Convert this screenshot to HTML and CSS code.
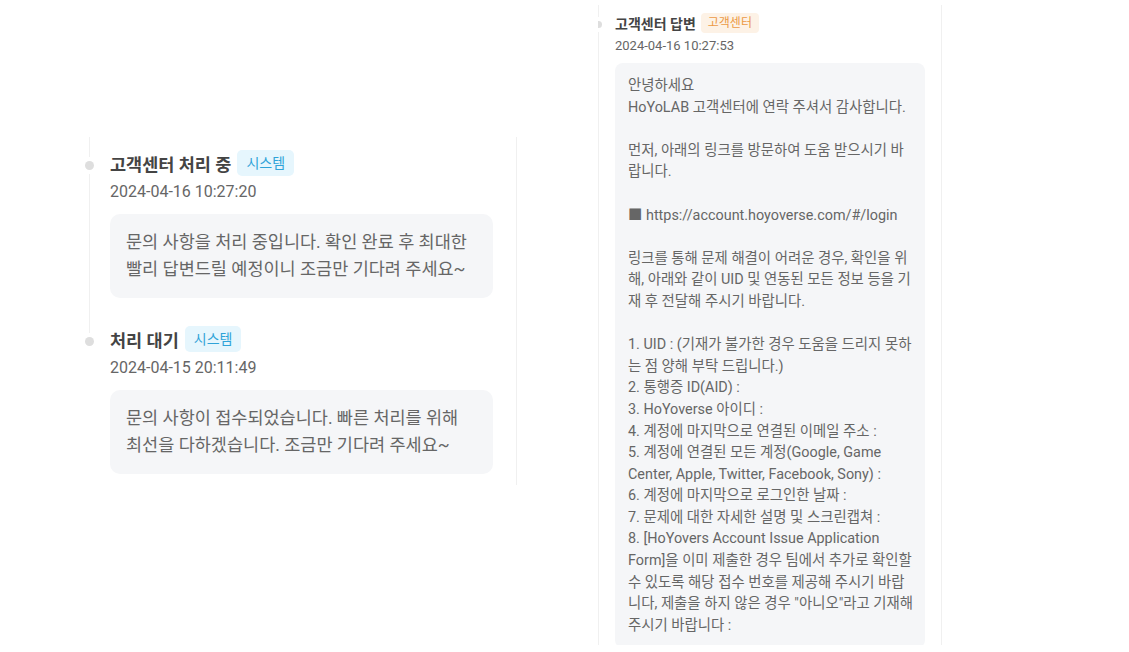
FILE: index.html
```html
<!DOCTYPE html>
<html lang="ko">
<head>
    <meta charset="UTF-8">
    <meta name="viewport" content="width=device-width, initial-scale=1.0">
    <title>문의 처리 내역</title>
    <link rel="stylesheet" href="styles.css">
</head>
<body>
    <div class="page">

        <!-- progress log -->
        <div class="pane pane-large">
            <div class="item">
                <div class="item-head">
                    <span class="item-title">고객센터 처리 중</span>
                    <span class="tag tag-system">시스템</span>
                </div>
                <div class="item-date">2024-04-16 10:27:20</div>
                <div class="bubble">문의 사항을 처리 중입니다. 확인 완료 후 최대한 빨리 답변드릴 예정이니 조금만 기다려 주세요~</div>
            </div>
            <div class="item">
                <div class="item-head">
                    <span class="item-title">처리 대기</span>
                    <span class="tag tag-system">시스템</span>
                </div>
                <div class="item-date">2024-04-15 20:11:49</div>
                <div class="bubble">문의 사항이 접수되었습니다. 빠른 처리를 위해 최선을 다하겠습니다. 조금만 기다려 주세요~</div>
            </div>
        </div>

        <!-- answer -->
        <div class="pane pane-small">
            <div class="item">
                <div class="item-head">
                    <span class="item-title">고객센터 답변</span>
                    <span class="tag tag-cs">고객센터</span>
                </div>
                <div class="item-date">2024-04-16 10:27:53</div>
                <div class="bubble">안녕하세요
HoYoLAB 고객센터에 연락 주셔서 감사합니다.

먼저, 아래의 링크를 방문하여 도움 받으시기 바랍니다.

■ https://account.hoyoverse.com/#/login

링크를 통해 문제 해결이 어려운 경우, 확인을 위해, 아래와 같이 UID 및 연동된 모든 정보 등을 기재 후 전달해 주시기 바랍니다.

1. UID : (기재가 불가한 경우 도움을 드리지 못하는 점 양해 부탁 드립니다.)
2. 통행증 ID(AID) :
3. HoYoverse 아이디 :
4. 계정에 마지막으로 연결된 이메일 주소 :
5. 계정에 연결된 모든 계정(Google, Game Center, Apple, Twitter, Facebook, Sony) :
6. 계정에 마지막으로 로그인한 날짜 :
7. 문제에 대한 자세한 설명 및 스크린캡쳐 :
8. [HoYovers Account Issue Application Form]을 이미 제출한 경우 팀에서 추가로 확인할 수 있도록 해당 접수 번호를 제공해 주시기 바랍니다, 제출을 하지 않은 경우 "아니오"라고 기재해 주시기 바랍니다 :
</div>
            </div>
        </div>

    </div>
</body>
</html>
```

FILE: styles.css
```css
body {
    margin: 0;
    background: #fff;
    font-family: Roboto, "Noto Sans CJK KR", sans-serif;
    color: #444;
}

.page {
    display: flex;
    align-items: flex-start;
    padding-left: 89px;
}

.pane {
    border-right: 1px solid #f0f0f0;
    box-sizing: border-box;
}

.item {
    position: relative;
}

/* timeline line + dot */
.item::before {
    content: "";
    position: absolute;
    left: 0;
    top: 0;
    bottom: 0;
    width: 1px;
    background: #f0f0f0;
}

.item:last-child::before {
    bottom: auto;
    height: 20px;
}

.pane-small .item:last-child::before {
    bottom: 0;
    height: auto;
}

.item::after {
    content: "";
    position: absolute;
    border-radius: 50%;
    background: #dedede;
    box-shadow: 0 0 0 4px #fff;
}

.item-head {
    display: flex;
    align-items: center;
}

.item-title {
    font-weight: bold;
    color: #444;
}

.tag {
    border-radius: 4px;
}

.tag-system {
    background: #e6f6fd;
    color: #2fa3d8;
}

.tag-cs {
    background: #fdf2e6;
    color: #ec9a45;
}

.item-date {
    color: #666;
}

.bubble {
    background: #f5f6f8;
    color: #666;
}

/* left column, bigger scale */
.pane-large {
    width: 428px;
    margin-top: 137px;
    padding: 0 23px 11px 0;
}

.pane-large .item {
    padding: 13px 0 15px 21px;
}

.pane-large .item:last-child {
    padding-bottom: 0;
}

.pane-large .item::after {
    left: -4px;
    top: 24px;
    width: 9px;
    height: 9px;
}

.pane-large .item-head {
    height: 26px;
}

.pane-large .item-title {
    font-size: 17.5px;
}

.pane-large .tag {
    margin-left: 6px;
    padding: 0 9px;
    font-size: 14px;
    line-height: 26px;
    border-radius: 5px;
}

.pane-large .item-date {
    margin-top: 5px;
    font-size: 16px;
    line-height: 22px;
}

.pane-large .bubble {
    margin-top: 11px;
    padding: 15px 20px 15px 16px;
    border-radius: 10px;
    font-size: 17.5px;
    line-height: 27px;
}

/* right column, smaller scale */
.pane-small {
    width: 344px;
    height: 640px;
    margin: 5px 0 0 81px;
    padding-right: 16px;
    overflow: hidden;
}

.pane-small .item {
    height: 100%;
    padding: 8px 0 0 17px;
    box-sizing: border-box;
}

.pane-small .item::after {
    left: -3px;
    top: 16px;
    width: 7px;
    height: 7px;
}

.pane-small .item-head {
    height: 20px;
}

.pane-small .item-title {
    font-size: 14px;
}

.pane-small .tag {
    margin-left: 5px;
    padding: 0 7px;
    font-size: 12px;
    line-height: 20px;
}

.pane-small .item-date {
    margin-top: 4px;
    font-size: 13px;
    line-height: 18px;
}

.pane-small .bubble {
    margin-top: 8px;
    padding: 12px 11px 12px 13px;
    border-radius: 8px;
    font-size: 14.4px;
    line-height: 21.6px;
    white-space: pre-line;
}
```
